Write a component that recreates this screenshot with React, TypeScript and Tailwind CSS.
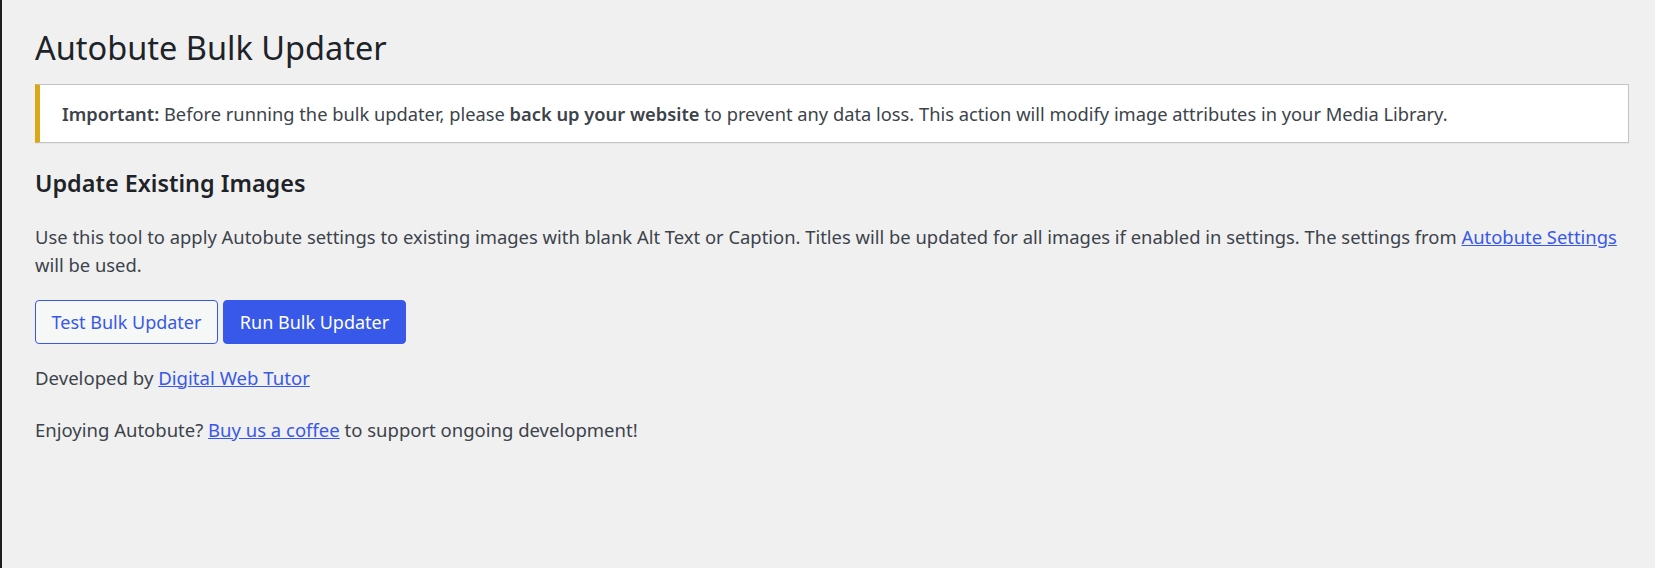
import React from "react";

export default function App() {
  return (
    <div className="flex min-h-[568px] w-full bg-[#f0f0f1] font-['Noto_Sans',sans-serif] text-[#3c434a]">
      <div className="w-[2px] shrink-0 bg-[#1e1e1e]" />
      <div className="flex-1 pl-[33px] pr-[26px] pt-[27px]">
        <h1 className="text-[32.5px] font-normal leading-[42px] text-[#1d2327]">
          Autobute Bulk Updater
        </h1>

        <div className="mt-[15px] border border-l-[5px] border-[#c3c4c7] border-l-[#dba617] bg-white py-[15px] pl-[22px] pr-[12px] shadow-[0_1px_1px_rgba(0,0,0,0.04)]">
          <p className="text-[18.3px] leading-[27px]">
            <strong className="font-semibold text-[#3c434a]">Important:</strong> Before running the bulk updater, please{" "}
            <strong className="font-semibold">back up your website</strong> to prevent any data loss. This action will modify image attributes in your Media Library.
          </p>
        </div>

        <h2 className="mt-[25px] text-[23.4px] font-semibold leading-[30px] text-[#1d2327]">
          Update Existing Images
        </h2>

        <p className="mt-[25px] text-[18.4px] leading-[27.6px]">
          Use this tool to apply Autobute settings to existing images with blank Alt Text or Caption. Titles will be updated for all images if enabled in settings. The settings from{" "}
          <a href="#" className="text-[#3858e9] underline">Autobute Settings</a> will be used.
        </p>

        <div className="mt-[22px] flex gap-[5px]">
          <button className="h-[44px] w-[183px] rounded-[4px] border border-[#3858e9] bg-[#f6f7f7] text-[18px] text-[#3858e9]">
            Test Bulk Updater
          </button>
          <button className="h-[44px] w-[183px] rounded-[4px] border border-[#3858e9] bg-[#3858e9] text-[18px] text-white">
            Run Bulk Updater
          </button>
        </div>

        <p className="mt-[19.5px] text-[18.6px] leading-[27.6px]">
          Developed by <a href="#" className="text-[#3858e9] underline">Digital Web Tutor</a>
        </p>

        <p className="mt-[24.4px] text-[18.5px] leading-[27.6px]">
          Enjoying Autobute? <a href="#" className="text-[#3858e9] underline">Buy us a coffee</a> to support ongoing development!
        </p>
      </div>
    </div>
  );
}
